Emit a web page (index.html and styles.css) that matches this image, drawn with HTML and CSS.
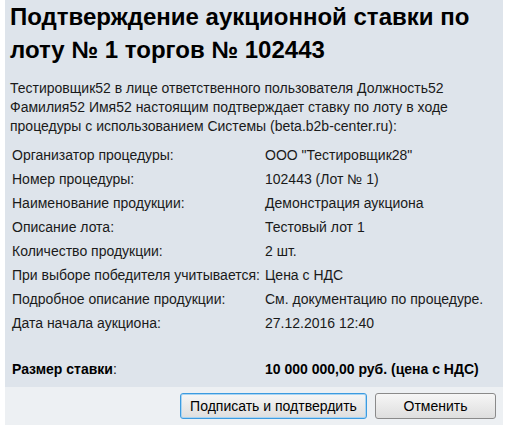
FILE: index.html
```html
<!DOCTYPE html>
<html lang="ru">
<head>
<meta charset="utf-8">
<title>Подтверждение аукционной ставки</title>
<link rel="stylesheet" href="styles.css">
</head>
<body>
<div class="dialog">
  <div class="content">
    <h1 class="title">Подтверждение аукционной ставки по лоту № 1 торгов № 102443</h1>
    <p class="intro">Тестировщик52 в лице ответственного пользователя Должность52 Фамилия52 Имя52 настоящим подтверждает ставку по лоту в ходе процедуры с использованием Системы (beta.b2b-center.ru):</p>
    <table class="info">
      <tr><td class="label">Организатор процедуры:</td><td class="value">ООО "Тестировщик28"</td></tr>
      <tr><td class="label">Номер процедуры:</td><td class="value">102443 (Лот № 1)</td></tr>
      <tr><td class="label">Наименование продукции:</td><td class="value">Демонстрация аукциона</td></tr>
      <tr><td class="label">Описание лота:</td><td class="value">Тестовый лот 1</td></tr>
      <tr><td class="label">Количество продукции:</td><td class="value">2 шт.</td></tr>
      <tr><td class="label">При выборе победителя учитывается:</td><td class="value">Цена с НДС</td></tr>
      <tr><td class="label">Подробное описание продукции:</td><td class="value">См. документацию по процедуре.</td></tr>
      <tr><td class="label">Дата начала аукциона:</td><td class="value">27.12.2016 12:40</td></tr>
      <tr class="spacer"><td colspan="2"></td></tr>
      <tr class="total"><td class="label"><b>Размер ставки</b>:</td><td class="value"><b>10 000 000,00 руб. (цена с НДС)</b></td></tr>
    </table>
  </div>
  <div class="footer">
    <button class="btn btn-primary" type="button">Подписать и подтвердить</button>
    <button class="btn btn-cancel" type="button">Отменить</button>
  </div>
</div>
</body>
</html>
```

FILE: styles.css
```css
html, body {
  margin: 0;
  padding: 0;
  background: #ffffff;
}
body {
  padding: 0 5px;
  font-family: "Liberation Sans", Arial, sans-serif;
  font-size: 14px;
  color: #1a1a1a;
}
.dialog {
  width: 498px;
}
.content {
  background: #dee4eb;
  padding: 0 5px 6px;
}
.title {
  margin: 0;
  font-size: 24px;
  line-height: 33px;
  font-weight: bold;
  color: #000;
}
.intro {
  margin: 13px 0 0;
  line-height: 19px;
}
.info {
  border-collapse: collapse;
  margin-top: 7px;
}
.info td {
  padding: 4px 0;
  line-height: 16px;
  vertical-align: top;
  white-space: nowrap;
}
.info td.label {
  width: 253px;
  padding-left: 2px;
}
.info .spacer td {
  height: 14px;
}
.info .total b {
  color: #000;
}
.footer {
  background: #edf0f3;
  padding: 6px 7px 6px 0;
  display: flex;
  justify-content: flex-end;
  gap: 8px;
}
.btn {
  font-family: "Liberation Sans", Arial, sans-serif;
  font-size: 14px;
  color: #000;
  height: 26px;
  border: 1px solid #8a8a8a;
  border-radius: 3px;
  background: linear-gradient(#f6f6f6, #dedede);
  padding: 0;
  white-space: nowrap;
  box-sizing: border-box;
}
.btn-primary {
  width: 187px;
  border-color: #3c9be0;
  box-shadow: inset 0 0 0 1px #a9d4f2;
}
.btn-cancel {
  width: 121px;
}
```
